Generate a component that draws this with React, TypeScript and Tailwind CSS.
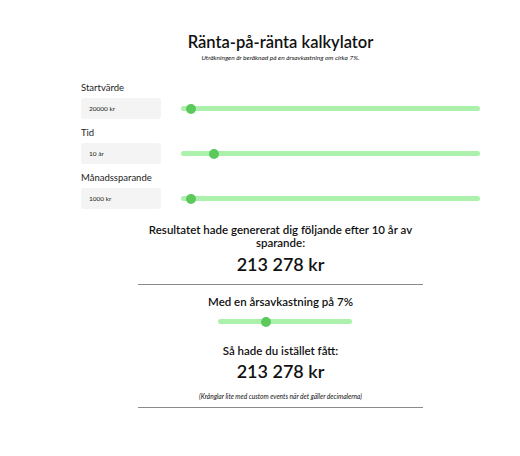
import React from "react";

const font = { fontFamily: "Lato, 'Noto Sans', sans-serif" };

function Slider({ width, pos }: { width: number; pos: number }) {
  return (
    <div className="relative h-[5px] rounded-full bg-[#abf0ab]" style={{ width }}>
      <div
        className="absolute top-1/2 h-[10px] w-[10px] -translate-x-1/2 -translate-y-1/2 rounded-full bg-[#5cc95c]"
        style={{ left: pos }}
      />
    </div>
  );
}

function Row({ label, value, pos }: { label: string; value: string; pos: number }) {
  return (
    <div className="flex flex-col">
      <div className="h-[11px] text-[9.5px] leading-[11px] text-[#222]">{label}</div>
      <div className="mt-[5px] flex items-center gap-[20px]">
        <div className="flex h-[21px] w-[80px] items-center rounded-[3px] bg-[#f4f4f4] pl-[8px] text-[6.5px] text-[#222]">
          {value}
        </div>
        <Slider width={299} pos={pos} />
      </div>
    </div>
  );
}

export default function App() {
  return (
    <div className="h-[456px] w-[520px] bg-white text-[#111]" style={font}>
      <div className="ml-[81px] w-[399px] pt-[30px]">
        <h1 className="text-center text-[16.5px] font-semibold leading-[24px]">Ränta-på-ränta kalkylator</h1>
        <p className="text-center text-[6.5px] italic leading-[8px]">
          Uträkningen är beräknad på en årsavkastning om cirka 7%.
        </p>
        <div className="mt-[20px] flex flex-col gap-[8px]">
          <Row label="Startvärde" value="20000 kr" pos={10} />
          <Row label="Tid" value="10 år" pos={33} />
          <Row label="Månadssparande" value="1000 kr" pos={10} />
        </div>
        <div className="mx-auto mt-[14px] w-[285px] text-center">
          <div className="text-[11.5px] font-semibold leading-[13px]">
            Resultatet hade genererat dig följande efter 10 år av sparande:
          </div>
          <div className="mt-[4px] text-[18px] font-semibold leading-[22px]">213 278 kr</div>
          <div className="mt-[9px] h-px bg-[#8a8a8a]" />
          <div className="mt-[10px] text-[11.5px] font-semibold leading-[14px]">Med en årsavkastning på 7%</div>
          <div className="mt-[10px] flex justify-start pl-[80px]">
            <Slider width={134} pos={48} />
          </div>
          <div className="mt-[20px] text-[11.5px] font-semibold leading-[14px]">Så hade du istället fått:</div>
          <div className="mt-[2px] text-[18px] font-semibold leading-[22px]">213 278 kr</div>
          <p className="mt-[10px] text-[6.6px] italic leading-[8px]">
            (Krånglar lite med custom events när det gäller decimalerna)
          </p>
          <div className="mt-[7px] h-px bg-[#8a8a8a]" />
        </div>
      </div>
    </div>
  );
}
